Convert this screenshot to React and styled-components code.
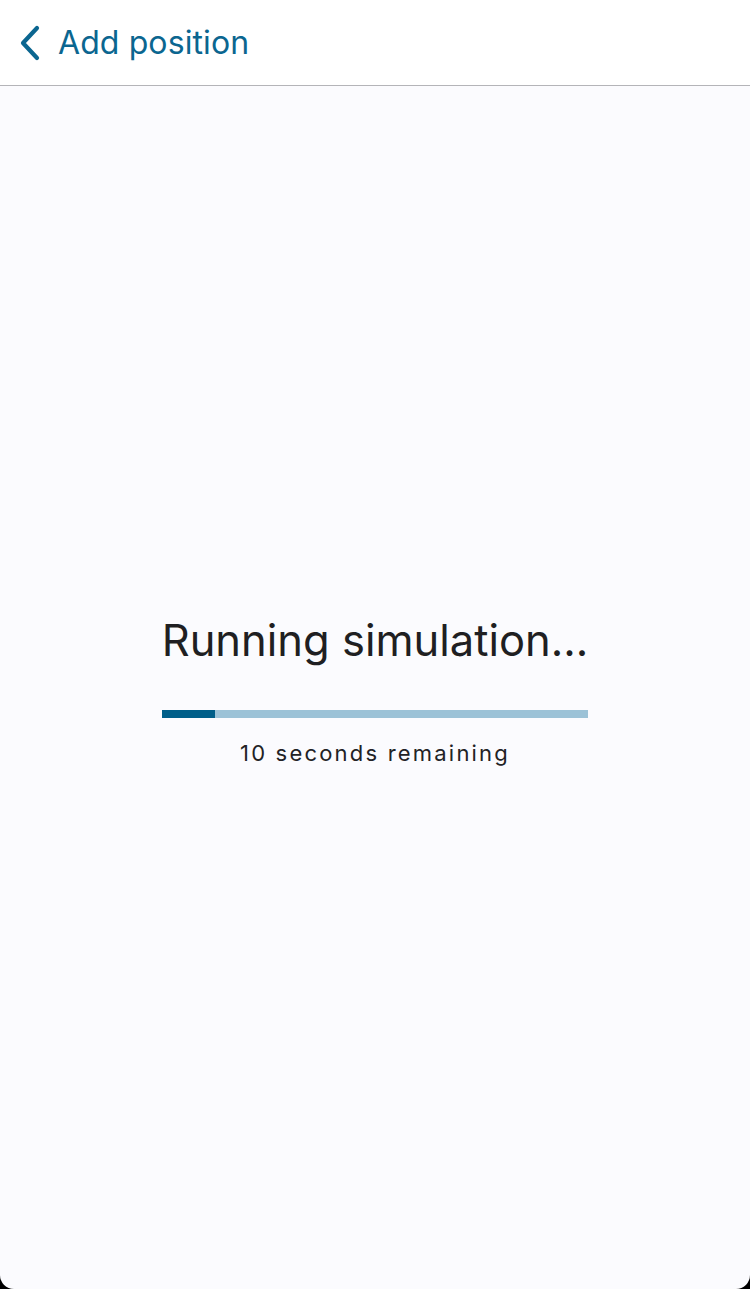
import React from "react";
import styled, { createGlobalStyle } from "styled-components";

const GlobalStyle = createGlobalStyle`
  html, body {
    margin: 0;
    padding: 0;
    background: #000;
  }
  body {
    font-family: Inter, "Noto Sans", sans-serif;
  }
`;

export default function App() {
  const progress = 12.5;
  return (
    <>
      <GlobalStyle />
      <Screen>
        <Header>
          <BackButton type="button">
            <svg width="24" height="36" viewBox="0 0 24 36" fill="none">
              <path
                d="M19 3 L5 18 L19 33"
                stroke="#0b6690"
                strokeWidth="4.2"
                strokeLinecap="round"
                strokeLinejoin="round"
              />
            </svg>
            <HeaderTitle>Add position</HeaderTitle>
          </BackButton>
        </Header>
        <Body>
          <Loader>
            <Title>Running simulation...</Title>
            <Track>
              <Fill style={{ width: `${progress}%` }} />
            </Track>
            <Remaining>10 seconds remaining</Remaining>
          </Loader>
        </Body>
      </Screen>
    </>
  );
}

const Screen = styled.div`
  display: flex;
  flex-direction: column;
  width: 750px;
  height: 1289px;
  background: #fbfbfe;
  border-radius: 0 0 14px 14px;
  overflow: hidden;
`;

const Header = styled.header`
  display: flex;
  align-items: center;
  height: 85px;
  padding: 0 18px;
  background: #ffffff;
  border-bottom: 1px solid #b4b4b8;
`;

const BackButton = styled.button`
  display: flex;
  align-items: center;
  gap: 16px;
  padding: 0;
  border: none;
  background: none;
  cursor: pointer;
`;

const HeaderTitle = styled.span`
  font-family: Inter, "Noto Sans", sans-serif;
  font-size: 32px;
  color: #0b6690;
  letter-spacing: 0.1px;
`;

const Body = styled.main`
  flex: 1;
  display: flex;
  align-items: center;
  justify-content: center;
  padding-top: 5px;
`;

const Loader = styled.div`
  display: flex;
  flex-direction: column;
  align-items: center;
  width: 426px;
`;

const Title = styled.h1`
  margin: 0;
  font-family: Inter, "Noto Sans", sans-serif;
  font-size: 43.5px;
  font-weight: 400;
  color: #1f1f22;
  white-space: nowrap;
`;

const Track = styled.div`
  width: 100%;
  height: 8px;
  margin-top: 44px;
  background: #9cc2d7;
`;

const Fill = styled.div`
  height: 100%;
  background: #005e89;
`;

const Remaining = styled.p`
  margin: 22px 0 0;
  font-family: Inter, "Noto Sans", sans-serif;
  font-size: 22px;
  letter-spacing: 2.2px;
  color: #222225;
`;
